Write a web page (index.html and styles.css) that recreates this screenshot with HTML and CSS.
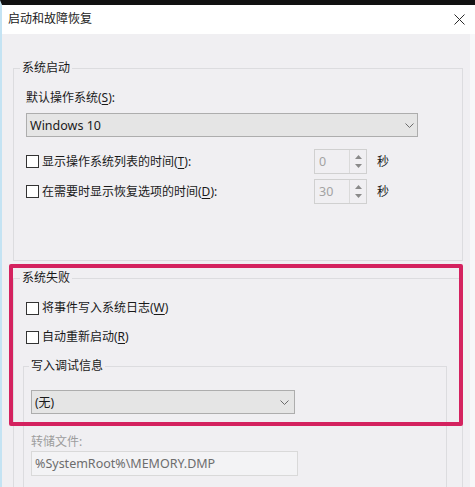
FILE: index.html
```html
<!DOCTYPE html>
<html lang="zh-CN">
<head>
<meta charset="utf-8">
<title>启动和故障恢复</title>
<link rel="stylesheet" href="styles.css">
</head>
<body>
<div class="window">
  <div class="titlebar">
    <span class="title">启动和故障恢复</span>
    <svg class="close" width="11" height="11" viewBox="0 0 11 11"><path d="M0.5 0.5L10.5 10.5M10.5 0.5L0.5 10.5" stroke="#2b2b2b" stroke-width="1" fill="none"/></svg>
  </div>
  <div class="content">
    <fieldset class="group g1">
      <legend>系统启动</legend>
      <div class="label">默认操作系统(<u>S</u>):</div>
      <div class="select sel1">
        <span class="latin">Windows 10</span>
        <svg width="9" height="5" viewBox="0 0 9 5"><path d="M0.5 0.5L4.5 4.5L8.5 0.5" stroke="#6b6b6b" stroke-width="1" fill="none"/></svg>
      </div>
      <div class="timerow first">
        <label class="check"><span class="box"></span>显示操作系统列表的时间(<u>T</u>):</label>
        <div class="spin">
          <span class="latin num">0</span>
          <span class="arrows">
            <svg width="7" height="4" viewBox="0 0 7 4"><path d="M3.5 0L7 4H0Z" fill="#8a8a8a"/></svg>
            <svg width="7" height="4" viewBox="0 0 7 4"><path d="M0 0H7L3.5 4Z" fill="#8a8a8a"/></svg>
          </span>
        </div>
        <span class="unit">秒</span>
      </div>
      <div class="timerow">
        <label class="check"><span class="box"></span>在需要时显示恢复选项的时间(<u>D</u>):</label>
        <div class="spin">
          <span class="latin num">30</span>
          <span class="arrows">
            <svg width="7" height="4" viewBox="0 0 7 4"><path d="M3.5 0L7 4H0Z" fill="#8a8a8a"/></svg>
            <svg width="7" height="4" viewBox="0 0 7 4"><path d="M0 0H7L3.5 4Z" fill="#8a8a8a"/></svg>
          </span>
        </div>
        <span class="unit">秒</span>
      </div>
    </fieldset>

    <fieldset class="group g2">
      <legend>系统失败</legend>
      <label class="check row1"><span class="box"></span>将事件写入系统日志(<u>W</u>)</label>
      <label class="check row2"><span class="box"></span>自动重新启动(<u>R</u>)</label>
      <fieldset class="group g3">
        <legend>写入调试信息</legend>
        <div class="select sel2">
          <span>(无)</span>
          <svg width="9" height="5" viewBox="0 0 9 5"><path d="M0.5 0.5L4.5 4.5L8.5 0.5" stroke="#6b6b6b" stroke-width="1" fill="none"/></svg>
        </div>
        <div class="label disabled dumplabel">转储文件:</div>
        <div class="input latin">%SystemRoot%\MEMORY.DMP</div>
      </fieldset>
    </fieldset>
  </div>
</div>
<div class="highlight"></div>
</body>
</html>
```

FILE: styles.css
```css
* { box-sizing: border-box; }

html, body {
  margin: 0;
  padding: 0;
}

body {
  width: 475px;
  height: 487px;
  overflow: hidden;
  position: relative;
  background: #f0eff2;
  font-family: "Noto Sans", "Noto Sans CJK SC", sans-serif;
  font-size: 12px;
  color: #1a1a1a;
}

u { text-decoration: underline; text-underline-offset: 2px; }

.window {
  border-top: 5px solid #111;
  border-left: 2px solid #c4e3f3;
  height: 487px;
  overflow: hidden;
}

.titlebar {
  height: 29px;
  background: #fff;
  display: flex;
  align-items: center;
  justify-content: space-between;
  padding: 0 10px 0 6px;
}

.title {
  line-height: 16px;
  color: #222;
  padding-bottom: 1px;
}

.close { display: block; margin-bottom: 1px; }

.content {
  height: 453px;
  overflow: hidden;
  padding: 0 7px 0 11px;
  border-right: 5px solid #f7f7f9;
  background: #f0eff2;
}

.group {
  margin: 0;
  min-width: 0;
  border: 1px solid #dcdcdf;
}

.group > legend {
  padding: 0 2px;
  line-height: 16px;
  color: #1a1a1a;
}

.g1 {
  width: 450px;
  margin-top: 26px;
  padding: 14px 0 56px 12px;
}

.g1 > legend { margin-left: -6px; }

.label {
  line-height: 16px;
  height: 16px;
}

.latin { font-size: 12.5px; }

.select {
  display: flex;
  align-items: center;
  justify-content: space-between;
  height: 24px;
  border: 1px solid #adadad;
  background: #e5e5e5;
  padding: 0 5px 0 3px;
  color: #1a1a1a;
}

.select svg { display: block; }

.sel1 {
  width: 392px;
  margin-top: 7px;
  padding-right: 3px;
}

.timerow {
  display: flex;
  align-items: center;
  height: 25px;
  margin-top: 5px;
}

.timerow.first { margin-top: 12px; }

.timerow .check { width: 288px; }

.check {
  display: flex;
  align-items: center;
  line-height: 20px;
  height: 20px;
}

.box {
  width: 13px;
  height: 13px;
  border: 1px solid #333;
  background: #fff;
  margin-right: 3px;
  flex: none;
}

.spin {
  width: 53px;
  height: 25px;
  border: 1px solid #d0d0d0;
  background: #f0eff2;
  display: flex;
  justify-content: space-between;
}

.num {
  color: #a3a3a3;
  padding-left: 4px;
  line-height: 23px;
}

.arrows {
  width: 17px;
  border-left: 1px solid #dadada;
  display: flex;
  flex-direction: column;
  align-items: center;
  justify-content: space-around;
  padding: 3px 0;
}

.arrows svg { display: block; }

.unit {
  margin-left: 10px;
  line-height: 16px;
}

.g2 {
  width: 450px;
  margin-top: 9px;
  padding: 12px 0 60px 12px;
}

.g2 > legend { margin-left: -6px; }

.row2 { margin-top: 9px; }

.g3 {
  width: 424px;
  margin-top: 11px;
  margin-left: -3px;
  padding: 16px 0 40px 7px;
}

.g3 > legend { margin-left: -2px; }

.sel2 {
  width: 264px;
  padding-right: 5px;
}

.disabled { color: #9d9d9d; }

.dumplabel { margin-top: 20px; }

.input {
  width: 267px;
  height: 25px;
  margin-top: 1px;
  border: 1px solid #d9d9d9;
  background: #f3f3f5;
  color: #6d6d6d;
  line-height: 23px;
  padding-left: 3px;
}

.highlight {
  position: absolute;
  left: 9px;
  top: 264px;
  width: 454px;
  height: 162px;
  border: 4px solid #d4225f;
  border-radius: 2px;
  pointer-events: none;
}
```
